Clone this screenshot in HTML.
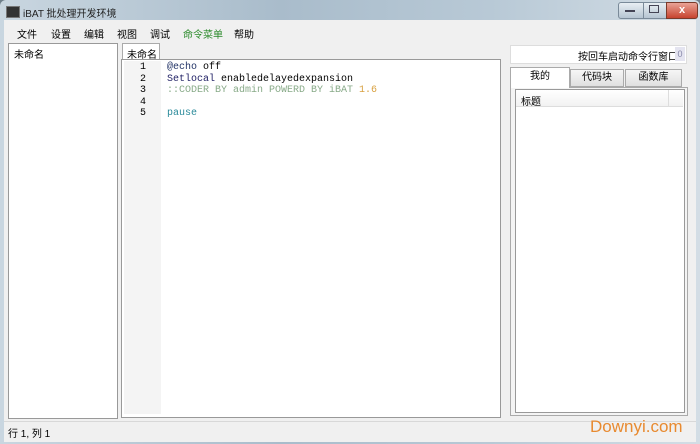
<html><head><style>
body{margin:0;width:700px;height:444px;overflow:hidden;background:#6f7f8a;font-family:"Liberation Sans","Noto Sans CJK SC",sans-serif;font-size:10px;position:relative}
.a{position:absolute}
.mono{font-family:"Liberation Mono","DejaVu Sans Mono",monospace;font-size:10px}
</style></head><body>
<div class="a" style="left:0;top:0;width:700px;height:444px;background:linear-gradient(90deg,#c9d6e0,#a9bccb 40%,#b8c9d6 70%,#d3dde5);border-radius:6px 6px 0 0"></div>
<div class="a" style="left:6px;top:6px;width:12px;height:10px;background:#333;border:1px solid #777"></div>
<div class="a" style="left:23px;top:5px;color:#222">iBAT 批处理开发环境</div>
<div class="a" style="left:618px;top:2px;width:24px;height:15px;background:linear-gradient(#e8eef3,#b6c5d2);border:1px solid #7a8a99;border-radius:3px 0 0 3px"></div>
<div class="a" style="left:625px;top:10px;width:10px;height:2px;background:#445"></div>
<div class="a" style="left:643px;top:2px;width:22px;height:15px;background:linear-gradient(#e8eef3,#b6c5d2);border:1px solid #7a8a99"></div>
<div class="a" style="left:649px;top:5px;width:8px;height:6px;border:1px solid #445"></div>
<div class="a" style="left:666px;top:2px;width:30px;height:15px;background:linear-gradient(#e9a396,#c7432f);border:1px solid #7a3a2a;border-radius:0 3px 3px 0;color:#fff;text-align:center;font-size:11px;font-weight:bold;line-height:15px">x</div>
<div class="a" style="left:4px;top:20px;width:692px;height:422px;background:#f0f0f0"></div>
<div class="a" style="left:17px;top:26px;color:#000">文件</div>
<div class="a" style="left:51px;top:26px">设置</div>
<div class="a" style="left:84px;top:26px">编辑</div>
<div class="a" style="left:117px;top:26px">视图</div>
<div class="a" style="left:150px;top:26px">调试</div>
<div class="a" style="left:183px;top:26px;color:#2a8a2a">命令菜单</div>
<div class="a" style="left:234px;top:26px">帮助</div>
<div class="a" style="left:8px;top:43px;width:108px;height:374px;background:#fff;border:1px solid #999"></div>
<div class="a" style="left:14px;top:46px">未命名</div>
<div class="a" style="left:122px;top:43px;width:36px;height:16px;background:#fff;border:1px solid #aaa;border-bottom:none"></div>
<div class="a" style="left:127px;top:46px">未命名</div>
<div class="a" style="left:121px;top:59px;width:378px;height:357px;background:#fff;border:1px solid #999"></div>
<div class="a" style="left:124px;top:61px;width:37px;height:353px;background:#f4f4f4"></div>
<div class="a mono" style="left:124px;top:62px;width:22px;text-align:right;line-height:11.6px;color:#000">1<br>2<br>3<br>4<br>5</div>
<div class="a mono" style="left:167px;top:62px;line-height:11.6px;white-space:pre"><span style="color:#236">@echo</span> off
<span style="color:#226">Setlocal</span> enabledelayedexpansion
<span style="color:#8a8">::CODER BY admin POWERD BY iBAT</span> <span style="color:#d8a040">1.6</span>

<span style="color:#2a8a9a">pause</span></div>
<div class="a" style="left:510px;top:45px;width:175px;height:17px;background:#fff;border:1px solid #ddd"></div>
<div class="a" style="left:578px;top:48px">按回车启动命令行窗口</div>
<div class="a" style="left:675px;top:47px;width:10px;height:14px;background:#e4e4f0;color:#88a;font-size:9px;text-align:center;line-height:14px">0</div>
<div class="a" style="left:510px;top:87px;width:176px;height:327px;border:1px solid #aaa;background:#f4f4f4"></div>
<div class="a" style="left:510px;top:67px;width:58px;height:20px;background:#fff;border:1px solid #aaa;border-bottom:none;text-align:center;line-height:18px">我的</div>
<div class="a" style="left:570px;top:69px;width:52px;height:16px;background:linear-gradient(#f6f6f6,#e0e0e0);border:1px solid #aaa;text-align:center;line-height:16px">代码块</div>
<div class="a" style="left:625px;top:69px;width:55px;height:16px;background:linear-gradient(#f6f6f6,#e0e0e0);border:1px solid #aaa;text-align:center;line-height:16px">函数库</div>
<div class="a" style="left:515px;top:89px;width:168px;height:322px;background:#fff;border:1px solid #999"></div>
<div class="a" style="left:516px;top:90px;width:167px;height:16px;background:linear-gradient(#fff,#f2f2f2);border-bottom:1px solid #ddd"></div>
<div class="a" style="left:668px;top:90px;width:1px;height:16px;background:#ddd"></div>
<div class="a" style="left:521px;top:93px">标题</div>
<div class="a" style="left:4px;top:421px;width:692px;height:1px;background:#d8d8d8"></div>
<div class="a" style="left:8px;top:425px">行 1, 列 1</div>
<div class="a" style="left:590px;top:417px;color:#e88a30;font-size:17px">Downyi.com</div>
</body></html>
